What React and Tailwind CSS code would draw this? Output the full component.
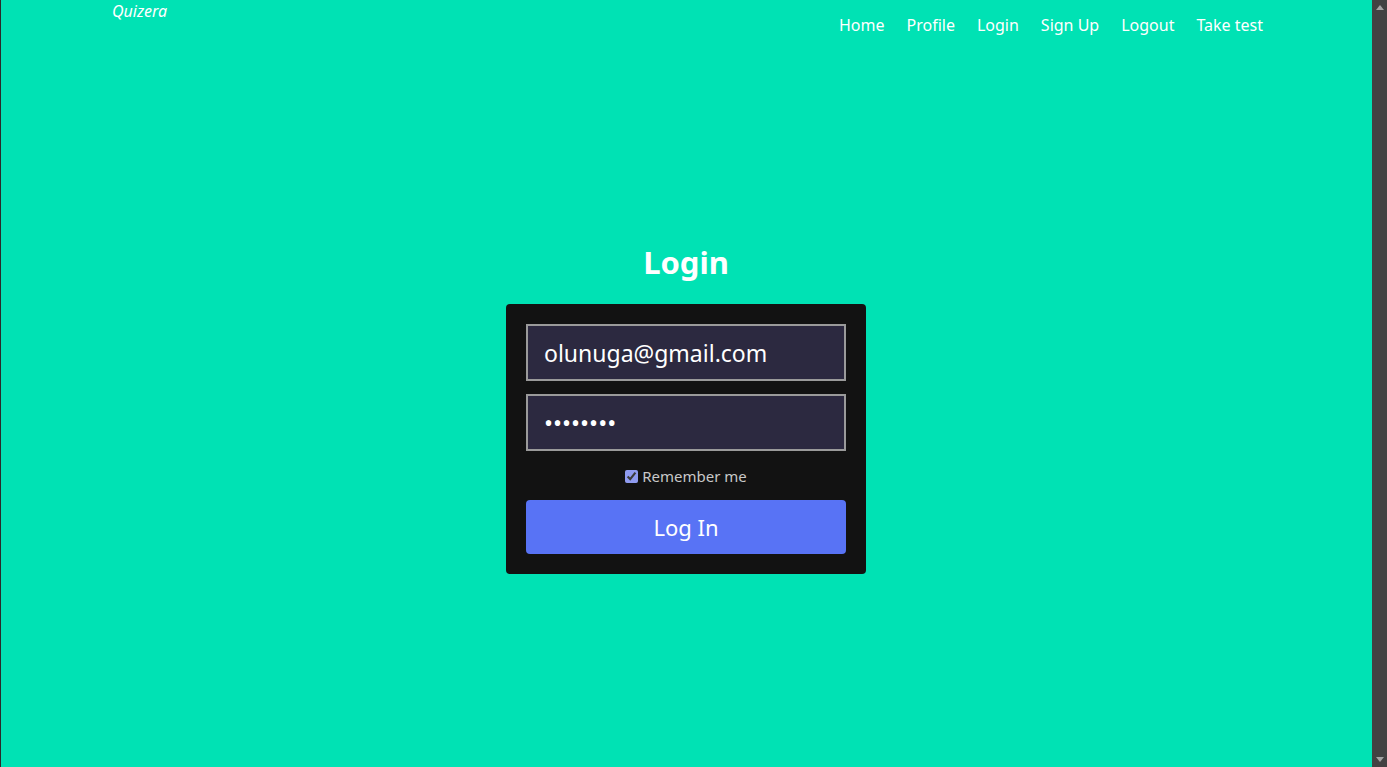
import React from 'react';

const links = ['Home', 'Profile', 'Login', 'Sign Up', 'Logout', 'Take test'];

const App = () => {
  return (
    <div className="flex h-[767px] w-full overflow-hidden bg-[#00e2b4] font-['Noto_Sans',sans-serif] text-white">
      <div className="w-px bg-[#2b2b2b]" />
      <main className="flex flex-1 flex-col">
        <header className="flex items-start justify-between pl-[111px] pr-[109px]">
          <span className="mt-[1px] text-[16px] italic leading-5">Quizera</span>
          <nav className="mt-[14px] flex gap-[22px] text-[16px] leading-[22px]">
            {links.map(l => (
              <a key={l} href="#" className="text-white">{l}</a>
            ))}
          </nav>
        </header>

        <section className="mt-[206px] flex flex-col items-center pr-[1px]">
          <h1 className="text-[31px] font-bold leading-[40px]">Login</h1>
          <form className="mt-[22px] flex w-[360px] flex-col rounded-[4px] bg-[#121212] p-5">
            <input
              type="email"
              defaultValue="olunuga@gmail.com"
              className="h-[57px] w-full border-2 border-[#9a9a9a] bg-[#2c2940] px-4 text-[23px] text-white outline-none"
            />
            <input
              type="password"
              defaultValue="password"
              className="mt-[13px] h-[57px] w-full border-2 border-[#9a9a9a] bg-[#2c2940] px-4 text-[24px] text-white outline-none"
            />
            <label className="mt-[15px] flex items-center justify-center gap-1 text-[15px] leading-5 text-[#c8c8c8]">
              <input type="checkbox" defaultChecked className="h-[13px] w-[13px] accent-[#8f9bf0]" />
              Remember me
            </label>
            <button
              type="button"
              className="mt-[14px] h-[54px] w-full rounded-[4px] bg-[#5873f5] text-[22px] text-white"
            >
              Log In
            </button>
          </form>
        </section>
      </main>
      <div className="flex w-[15px] flex-col items-center justify-between bg-[#424242] py-[5px]">
        <svg width="8" height="5" viewBox="0 0 8 5"><polygon points="4,0 8,5 0,5" fill="#a3a3a3" /></svg>
        <svg width="8" height="5" viewBox="0 0 8 5"><polygon points="0,0 8,0 4,5" fill="#a3a3a3" /></svg>
      </div>
    </div>
  );
};

export default App;
